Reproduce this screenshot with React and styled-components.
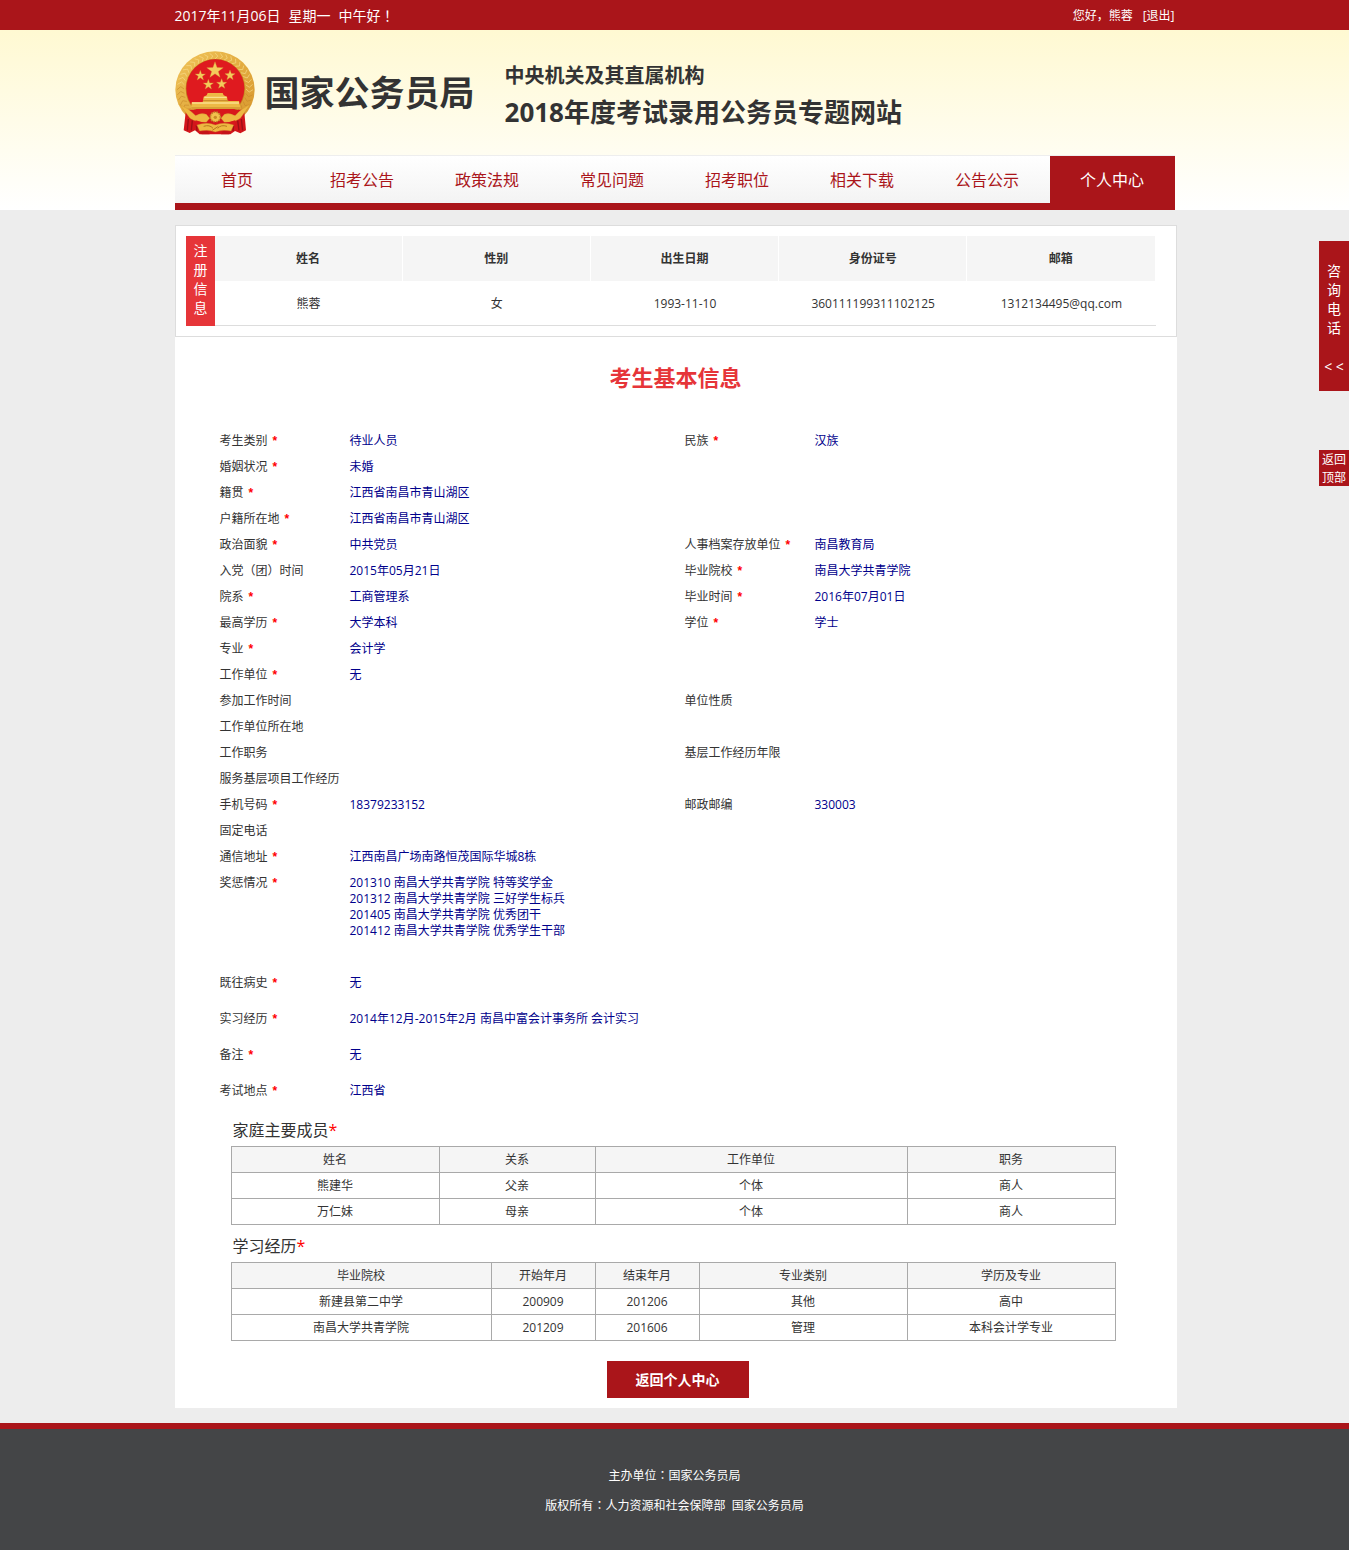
import React from 'react';
import styled, { createGlobalStyle, css } from 'styled-components';

const RED = '#aa151a';
const BRIGHT = '#e63539';

const GlobalStyle = createGlobalStyle`
  *, *::before, *::after { box-sizing: border-box; }
  body {
    margin: 0;
    background: #ededed;
    color: #333;
    font: 12px/16px "Open Sans", "Noto Sans CJK SC", sans-serif;
  }
  h1, h2, h3, p, dl, dt, dd, ul { margin: 0; padding: 0; }
  ul { list-style: none; }
  a { color: inherit; text-decoration: none; }
`;

/* Full-width punctuation set in the middle of its cell. */
const Mark = styled.span`
  font-family: "Noto Sans CJK TC", sans-serif;
  line-height: 1;
`;

const Container = styled.div`
  width: 100%;
  max-width: 1000px;
  margin: 0 auto;
`;

const TopBar = styled.div`
  background: ${RED};
  color: #fff;
`;

const TopBarInner = styled(Container)`
  display: flex;
  justify-content: space-between;
  padding-top: 2px;
  line-height: 28px;
`;

const Today = styled.p`
  display: flex;
  gap: 8px;
  font-size: 14px;
`;

const Account = styled.p`
  display: flex;
  gap: 10px;
`;

const Header = styled.header`
  background: linear-gradient(#fff9d2, #fff);
`;

const Brand = styled.div`
  display: flex;
  align-items: center;
  height: 125px;
`;

const Emblem = styled.svg`
  width: 80px;
  height: 84px;
  flex: none;
`;

const BureauName = styled.h1`
  margin-left: 10px;
  font-size: 35px;
  line-height: 40px;
`;

const SiteName = styled.div`
  margin-left: 30px;
  padding-top: 4px;
  font-weight: bold;
`;

const SiteOwner = styled.p`
  font-size: 20px;
  line-height: 34px;
`;

const SiteTitle = styled.p`
  font-size: 26px;
  line-height: 38px;
`;

const Nav = styled.nav`
  border-top: 1px solid #eee;
`;

const NavList = styled.ul`
  display: grid;
  grid-template-columns: repeat(8, 1fr);
  border-bottom: 7px solid ${RED};
  background: linear-gradient(#fff, #f3f3f3) padding-box;
`;

const NavLink = styled.a`
  display: block;
  padding-top: 1px;
  color: ${RED};
  font-size: 16px;
  line-height: 46px;
  text-align: center;
  ${(p) => p.$active && css`
    background: ${RED};
    color: #fff;
  `}
`;

const Main = styled.main`
  width: 100%;
  max-width: 1004px;
  margin: 15px auto;
  padding-left: 2px;
`;

const Registration = styled.section`
  display: flex;
  padding: 10px 20px 10px 10px;
  border: 1px solid #ddd;
  background: #fff;
`;

const RegistrationTag = styled.h2`
  flex: none;
  width: 29px;
  padding: 5px 7px 0 8px;
  background: ${BRIGHT};
  color: #fff;
  font-size: 14px;
  font-weight: normal;
  line-height: 19px;
`;

const RegistrationTable = styled.table`
  width: 100%;
  table-layout: fixed;
  border-collapse: separate;
  border-spacing: 0;
  text-align: center;

  th {
    height: 45px;
    padding: 0;
    border-right: 1px solid #fff;
    background: #f5f5f5;
  }
  td {
    height: 45px;
    padding: 2px 0 0;
    border-bottom: 1px solid #ddd;
  }
`;

const Panel = styled.section`
  padding-bottom: 10px;
  background: #fff;
`;

const PanelTitle = styled.h2`
  padding: 25px 0 36px;
  color: ${BRIGHT};
  font-size: 22px;
  line-height: 30px;
  text-align: center;
`;

const Facts = styled.dl`
  padding-left: 45px;
`;

const FactRow = styled.div`
  display: grid;
  grid-template-columns: 130px 335px 130px 1fr;
  padding: ${(p) => (p.$loose ? '10px 0' : '5px 0')};
  ${(p) => p.$list && css`padding-bottom: 26px;`}
`;

const FactLabel = styled.dt`
  white-space: nowrap;
`;

const FactValue = styled.dd`
  grid-column: ${(p) => (p.$wide ? '2 / -1' : 'auto')};
  color: #00008b;
`;

const Required = styled.span`
  color: #f00;
  ${(p) => p.$spaced && css`
    margin-left: 5px;
    font-family: "Liberation Sans", sans-serif;
    font-weight: bold;
    line-height: 1;
  `}
`;

const Records = styled.div`
  width: 885px;
  max-width: 100%;
  margin-left: 56px;
`;

const RecordsTitle = styled.h3`
  padding: 9px 2px 3px;
  font-size: 16px;
  font-weight: normal;
  line-height: 25px;
`;

const RecordsTable = styled.table`
  width: 100%;
  table-layout: fixed;
  border-collapse: collapse;
  text-align: center;

  th, td {
    height: 26px;
    padding: 0;
    border: 1px solid #a9a9a9;
    font-weight: normal;
  }
  th { background: #f5f5f5; }
`;

const Actions = styled.div`
  display: flex;
  justify-content: center;
  padding: 20px 0 0 4px;
`;

const BackButton = styled.button`
  width: 142px;
  height: 37px;
  padding: 0;
  border: 0;
  background: ${RED};
  color: #fff;
  font: bold 14px/37px "Open Sans", "Noto Sans CJK SC", sans-serif;
  cursor: pointer;
`;

const Footer = styled.footer`
  padding: 32px 0 29px;
  border-top: 6px solid ${RED};
  background: #444547;
  color: #fff;
  line-height: 30px;
  text-align: center;
`;

const HotlineTab = styled.button`
  position: fixed;
  top: 241px;
  right: 0;
  display: flex;
  flex-direction: column;
  align-items: center;
  gap: 20px;
  width: 30px;
  height: 150px;
  padding: 20px 0 0;
  border: 0;
  background: ${RED};
  color: #fff;
  font: 14px/19px "Open Sans", "Noto Sans CJK SC", sans-serif;
  cursor: pointer;
`;

const HotlineText = styled.span`
  width: 14px;
`;

const BackToTop = styled.a`
  position: fixed;
  top: 450px;
  right: 0;
  width: 30px;
  height: 36px;
  padding: 1px 3px 0;
  background: ${RED};
  color: #fff;
  line-height: 18px;
`;

const NAV = ['首页', '招考公告', '政策法规', '常见问题', '招考职位', '相关下载', '公告公示', '个人中心'];

const REGISTRATION = [
  ['姓名', '熊蓉'],
  ['性别', '女'],
  ['出生日期', '1993-11-10'],
  ['身份证号', '360111199311102125'],
  ['邮箱', '1312134495@qq.com'],
];

const fact = (label, value, required = true) => ({ label, value, required });

const FACTS = [
  { cells: [fact('考生类别', '待业人员'), fact('民族', '汉族')] },
  { cells: [fact('婚姻状况', '未婚')] },
  { cells: [fact('籍贯', '江西省南昌市青山湖区')] },
  { cells: [fact('户籍所在地', '江西省南昌市青山湖区')] },
  { cells: [fact('政治面貌', '中共党员'), fact('人事档案存放单位', '南昌教育局')] },
  { cells: [fact('入党（团）时间', '2015年05月21日', false), fact('毕业院校', '南昌大学共青学院')] },
  { cells: [fact('院系', '工商管理系'), fact('毕业时间', '2016年07月01日')] },
  { cells: [fact('最高学历', '大学本科'), fact('学位', '学士')] },
  { cells: [fact('专业', '会计学')] },
  { cells: [fact('工作单位', '无')] },
  { cells: [fact('参加工作时间', '', false), fact('单位性质', '', false)] },
  { cells: [fact('工作单位所在地', '', false)] },
  { cells: [fact('工作职务', '', false), fact('基层工作经历年限', '', false)] },
  { cells: [fact('服务基层项目工作经历', '', false)] },
  { cells: [fact('手机号码', '18379233152'), fact('邮政邮编', '330003', false)] },
  { cells: [fact('固定电话', '', false)] },
  { cells: [fact('通信地址', '江西南昌广场南路恒茂国际华城8栋')] },
  {
    list: true,
    cells: [
      fact('奖惩情况', [
        '201310 南昌大学共青学院 特等奖学金',
        '201312 南昌大学共青学院 三好学生标兵',
        '201405 南昌大学共青学院 优秀团干',
        '201412 南昌大学共青学院 优秀学生干部',
      ]),
    ],
  },
  { loose: true, cells: [fact('既往病史', '无')] },
  { loose: true, cells: [fact('实习经历', '2014年12月-2015年2月 南昌中富会计事务所 会计实习')] },
  { loose: true, cells: [fact('备注', '无')] },
  { loose: true, cells: [fact('考试地点', '江西省')] },
];

const FAMILY = {
  title: '家庭主要成员',
  columns: [['姓名', 4], ['关系', 3], ['工作单位', 6], ['职务', 4]],
  rows: [
    ['熊建华', '父亲', '个体', '商人'],
    ['万仁妹', '母亲', '个体', '商人'],
  ],
};

const EDUCATION = {
  title: '学习经历',
  columns: [['毕业院校', 5], ['开始年月', 2], ['结束年月', 2], ['专业类别', 4], ['学历及专业', 4]],
  rows: [
    ['新建县第二中学', '200909', '201206', '其他', '高中'],
    ['南昌大学共青学院', '201209', '201606', '管理', '本科会计学专业'],
  ],
};

const starPoints = (cx, cy, r) =>
  Array.from({ length: 10 }, (_, i) => {
    const radius = i % 2 ? r * 0.4 : r;
    const angle = (Math.PI / 5) * i - Math.PI / 2;
    return `${(cx + radius * Math.cos(angle)).toFixed(1)},${(cy + radius * Math.sin(angle)).toFixed(1)}`;
  }).join(' ');

function NationalEmblem() {
  const grains = Array.from({ length: 44 }, (_, i) => (Math.PI * 2 * i) / 44);
  return (
    <Emblem viewBox="0 0 240 252" role="img" aria-label="国徽">
      <defs>
        <linearGradient id="gold" x1="0" y1="0" x2="1" y2="1">
          <stop offset="0" stopColor="#f0c45a" />
          <stop offset="0.5" stopColor="#e3ac40" />
          <stop offset="1" stopColor="#d6952c" />
        </linearGradient>
      </defs>
      <ellipse cx="120" cy="116" rx="119" ry="115" fill="url(#gold)" />
      {grains.map((a) => (
        <path
          key={a}
          d={`M${120 + 93 * Math.cos(a)} ${114 + 90 * Math.sin(a)} L${120 + 103 * Math.cos(a + 0.08)} ${115 + 100 * Math.sin(a + 0.08)} L${120 + 114 * Math.cos(a)} ${116 + 110 * Math.sin(a)}`}
          fill="none"
          stroke={Math.sin(a) > 0 ? '#c98a2a' : '#f8dc8a'}
          strokeWidth="2"
        />
      ))}
      <circle cx="121" cy="113" r="89" fill="#c4811f" />
      <circle cx="121" cy="112" r="87" fill="#df1a1f" />
      <path d="M32 184 L26 238 L44 246 L60 238 L74 250 H166 L180 240 L196 247 L213 238 L208 184 L180 200 H60Z" fill="#d3161b" />
      <path d="M40 204 L37 238 M52 208 L49 238 M64 222 L66 240 M199 204 L203 238 M188 208 L192 238 M176 222 L174 240" stroke="#9c1015" strokeWidth="4" />
      <g fill="#f4cb5c" stroke="#d39a38" strokeWidth="1">
        <polygon points={starPoints(120, 58, 26)} />
        <polygon points={starPoints(76, 74, 16)} />
        <polygon points={starPoints(165, 73, 16)} />
        <polygon points={starPoints(100, 101, 16)} />
        <polygon points={starPoints(140, 99, 16)} />
      </g>
      <path d="M98 126 H143 L146 133 L156 137 L158 150 H192 L197 174 H48 L50 154 H83 L86 137 L95 133Z" fill="#edb945" />
      <path d="M88 139 H155 M51 156 H192" stroke="#fae08c" strokeWidth="4" />
      <path d="M84 149 H160 M49 171 H196" stroke="#c4862a" strokeWidth="3" />
      <path d="M40 176 H202 L184 194 Q160 190 150 202 H92 Q80 190 58 194Z" fill="#d8171c" />
      <path d="M14 160 Q40 172 62 194 Q78 184 94 190 L104 202 L94 214 Q66 216 45 202Z M226 160 Q200 172 180 194 Q162 184 148 190 L138 202 L148 214 Q176 216 196 202Z" fill="#eeb842" stroke="#c98a2a" strokeWidth="1" />
      <circle cx="121" cy="198" r="15" fill="#f1c14d" stroke="#c4862a" strokeWidth="5" strokeDasharray="5 3" />
      <circle cx="121" cy="199" r="5" fill="#c98a26" />
      <path d="M62 208 Q92 220 121 214 Q150 220 180 208 L180 224 H62Z" fill="#d8171c" />
      <path d="M66 222 Q96 212 121 222 Q146 212 176 222 L168 240 Q142 234 121 243 Q100 234 74 240Z" fill="#eeb842" stroke="#c98a2a" strokeWidth="1" />
      <path d="M86 226 Q104 220 114 232 M156 226 Q138 220 128 232 M112 238 L130 226" fill="none" stroke="#b9771c" strokeWidth="3" />
      <path d="M74 242 L80 250 H104 L98 240Z M168 242 L162 250 H138 L144 240Z" fill="#c41419" />
    </Emblem>
  );
}

function Facet({ label, value, required, wide }) {
  return (
    <>
      <FactLabel>
        {label}
        {required && <Required $spaced>*</Required>}
      </FactLabel>
      <FactValue $wide={wide}>
        {Array.isArray(value) ? value.map((line) => <p key={line}>{line}</p>) : value}
      </FactValue>
    </>
  );
}

function RecordSection({ title, columns, rows }) {
  const total = columns.reduce((sum, [, share]) => sum + share, 0);
  return (
    <>
      <RecordsTitle>
        {title}
        <Required>*</Required>
      </RecordsTitle>
      <RecordsTable>
        <thead>
          <tr>
            {columns.map(([name, share]) => (
              <th key={name} scope="col" style={{ width: `${(share / total) * 100}%` }}>{name}</th>
            ))}
          </tr>
        </thead>
        <tbody>
          {rows.map((row) => (
            <tr key={row[0]}>
              {row.map((cell, i) => <td key={i}>{cell}</td>)}
            </tr>
          ))}
        </tbody>
      </RecordsTable>
    </>
  );
}

export default function App() {
  return (
    <>
      <GlobalStyle />
      <TopBar>
        <TopBarInner>
          <Today>
            <span>2017年11月06日</span>
            <span>星期一</span>
            <span>中午好<Mark>！</Mark></span>
          </Today>
          <Account>
            <span>您好，熊蓉</span>
            <a href="#logout">[退出]</a>
          </Account>
        </TopBarInner>
      </TopBar>
      <Header>
        <Container>
          <Brand>
            <NationalEmblem />
            <BureauName>国家公务员局</BureauName>
            <SiteName>
              <SiteOwner>中央机关及其直属机构</SiteOwner>
              <SiteTitle>2018年度考试录用公务员专题网站</SiteTitle>
            </SiteName>
          </Brand>
          <Nav>
            <NavList>
              {NAV.map((item) => (
                <li key={item}>
                  <NavLink href="#nav" $active={item === '个人中心'}>{item}</NavLink>
                </li>
              ))}
            </NavList>
          </Nav>
        </Container>
      </Header>
      <Main>
        <Registration>
          <RegistrationTag>注册信息</RegistrationTag>
          <RegistrationTable>
            <thead>
              <tr>{REGISTRATION.map(([name]) => <th key={name} scope="col">{name}</th>)}</tr>
            </thead>
            <tbody>
              <tr>{REGISTRATION.map(([name, value]) => <td key={name}>{value}</td>)}</tr>
            </tbody>
          </RegistrationTable>
        </Registration>
        <Panel>
          <PanelTitle>考生基本信息</PanelTitle>
          <Facts>
            {FACTS.map((row, i) => (
              <FactRow key={i} $loose={row.loose} $list={row.list}>
                {row.cells.map((cell, j) => (
                  <Facet key={j} {...cell} wide={row.cells.length === 1} />
                ))}
              </FactRow>
            ))}
          </Facts>
          <Records>
            <RecordSection {...FAMILY} />
            <RecordSection {...EDUCATION} />
          </Records>
          <Actions>
            <BackButton type="button">返回个人中心</BackButton>
          </Actions>
        </Panel>
      </Main>
      <Footer>
        <p>主办单位<Mark>：</Mark>国家公务员局</p>
        <p>版权所有<Mark>：</Mark>人力资源和社会保障部&nbsp; 国家公务员局</p>
      </Footer>
      <HotlineTab type="button">
        <HotlineText>咨询电话</HotlineText>
        <span>&lt; &lt;</span>
      </HotlineTab>
      <BackToTop href="#root">返回顶部</BackToTop>
    </>
  );
}
